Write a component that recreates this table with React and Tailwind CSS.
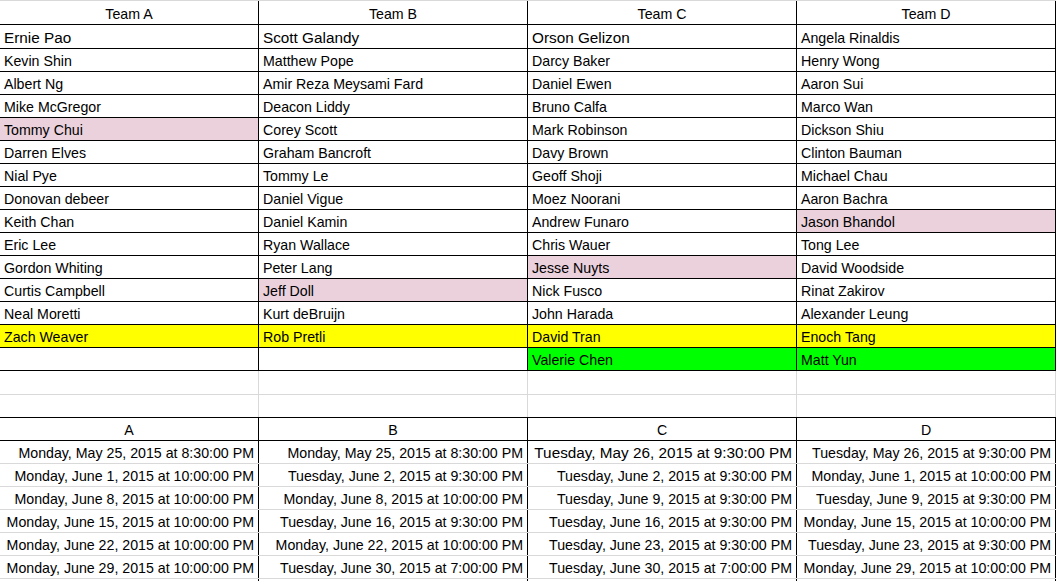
import React from "react";

const W = ["w-[259px]", "w-[269px]", "w-[269px]", "w-[259px]"];

const PINK = "bg-[#ead1dc]";
const YEL = "bg-[#ffff00]";
const GRN = "bg-[#00ff00]";

const names = [
  [["Ernie Pao", "", true], ["Scott Galandy", "", true], ["Orson Gelizon", "", true], ["Angela Rinaldis", "", false]],
  [["Kevin Shin"], ["Matthew Pope"], ["Darcy Baker"], ["Henry Wong"]],
  [["Albert Ng"], ["Amir Reza Meysami Fard"], ["Daniel Ewen"], ["Aaron Sui"]],
  [["Mike McGregor"], ["Deacon Liddy"], ["Bruno Calfa"], ["Marco Wan"]],
  [["Tommy Chui", PINK], ["Corey Scott"], ["Mark Robinson"], ["Dickson Shiu"]],
  [["Darren Elves"], ["Graham Bancroft"], ["Davy Brown"], ["Clinton Bauman"]],
  [["Nial Pye"], ["Tommy Le"], ["Geoff Shoji"], ["Michael Chau"]],
  [["Donovan debeer"], ["Daniel Vigue"], ["Moez Noorani"], ["Aaron Bachra"]],
  [["Keith Chan"], ["Daniel Kamin"], ["Andrew Funaro"], ["Jason Bhandol", PINK]],
  [["Eric Lee"], ["Ryan Wallace"], ["Chris Wauer"], ["Tong Lee"]],
  [["Gordon Whiting"], ["Peter Lang"], ["Jesse Nuyts", PINK], ["David Woodside"]],
  [["Curtis Campbell"], ["Jeff Doll", PINK], ["Nick Fusco"], ["Rinat Zakirov"]],
  [["Neal Moretti"], ["Kurt deBruijn"], ["John Harada"], ["Alexander Leung"]],
  [["Zach Weaver", YEL], ["Rob Pretli", YEL], ["David Tran", YEL], ["Enoch Tang", YEL]],
  [[""], [""], ["Valerie Chen", GRN], ["Matt Yun", GRN]],
];

const dates = [
  [["Monday, May 25, 2015 at 8:30:00 PM"], ["Monday, May 25, 2015 at 8:30:00 PM"], ["Tuesday, May 26, 2015 at 9:30:00 PM", true], ["Tuesday, May 26, 2015 at 9:30:00 PM"]],
  [["Monday, June 1, 2015 at 10:00:00 PM"], ["Tuesday, June 2, 2015 at 9:30:00 PM"], ["Tuesday, June 2, 2015 at 9:30:00 PM"], ["Monday, June 1, 2015 at 10:00:00 PM"]],
  [["Monday, June 8, 2015 at 10:00:00 PM"], ["Monday, June 8, 2015 at 10:00:00 PM"], ["Tuesday, June 9, 2015 at 9:30:00 PM"], ["Tuesday, June 9, 2015 at 9:30:00 PM"]],
  [["Monday, June 15, 2015 at 10:00:00 PM"], ["Tuesday, June 16, 2015 at 9:30:00 PM"], ["Tuesday, June 16, 2015 at 9:30:00 PM"], ["Monday, June 15, 2015 at 10:00:00 PM"]],
  [["Monday, June 22, 2015 at 10:00:00 PM"], ["Monday, June 22, 2015 at 10:00:00 PM"], ["Tuesday, June 23, 2015 at 9:30:00 PM"], ["Tuesday, June 23, 2015 at 9:30:00 PM"]],
  [["Monday, June 29, 2015 at 10:00:00 PM"], ["Tuesday, June 30, 2015 at 7:00:00 PM"], ["Tuesday, June 30, 2015 at 7:00:00 PM"], ["Monday, June 29, 2015 at 10:00:00 PM"]],
];

function Cell({ i, children, bg = "bg-white", rb = "border-black", align = "justify-start pl-[4px]", big = false }) {
  return (
    <div
      className={`${W[i]} ${bg} ${rb} ${align} border-r h-full shrink-0 flex items-end overflow-hidden whitespace-nowrap pb-[2px] ${
        big ? "text-[15.3px] leading-[17px]" : "text-[14.2px] leading-[16px]"
      }`}
    >
      {children}
    </div>
  );
}

export default function App() {
  return (
    <div className="w-[1059px] h-[581px] overflow-hidden bg-white text-black font-['Liberation_Sans',Arial,sans-serif]">
      <div className="w-[1056px]">
        {/* header */}
        <div className="flex h-[25px] border-t border-t-[#d9d9d9] border-b border-b-black">
          {["Team A", "Team B", "Team C", "Team D"].map((t, i) => (
            <Cell key={t} i={i} align="justify-center">
              {t}
            </Cell>
          ))}
        </div>
        {names.map((row, r) => (
          <div key={r} className={`flex ${r === 0 ? "h-[24px]" : "h-[23px]"} border-b border-black`}>
            {row.map((c, i) => (
              <Cell key={i} i={i} bg={c[1] || "bg-white"} big={!!c[2]}>
                {c[0]}
              </Cell>
            ))}
          </div>
        ))}
        {/* empty rows */}
        <div className="flex h-[24px] border-b border-[#d9d9d9]">
          {[0, 1, 2, 3].map((i) => (
            <Cell key={i} i={i} rb="border-[#d9d9d9]" />
          ))}
        </div>
        <div className="flex h-[23px] border-b border-black">
          {[0, 1, 2, 3].map((i) => (
            <Cell key={i} i={i} rb="border-[#d9d9d9]" />
          ))}
        </div>
        {/* date header */}
        <div className="flex h-[23px] border-b border-black">
          {["A", "B", "C", "D"].map((t, i) => (
            <Cell key={t} i={i} align="justify-center">
              {t}
            </Cell>
          ))}
        </div>
        {dates.map((row, r) => (
          <div key={r} className="flex h-[23px] border-b border-[#d9d9d9]">
            {row.map((c, i) => (
              <Cell key={i} i={i} align="justify-end pr-[4px]" big={!!c[1]}>
                {c[0]}
              </Cell>
            ))}
          </div>
        ))}
        <div className="flex h-[23px]">
          {[0, 1, 2, 3].map((i) => (
            <Cell key={i} i={i} />
          ))}
        </div>
      </div>
    </div>
  );
}
